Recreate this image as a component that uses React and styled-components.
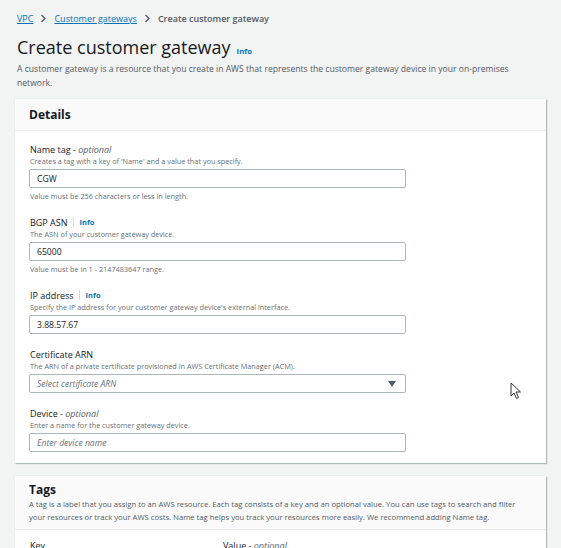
import { styled, createGlobalStyle } from 'styled-components'

const GlobalStyle = createGlobalStyle`
  html, body {
    margin: 0;
    padding: 0;
    background: #f2f3f3;
    font-family: "Open Sans", "Noto Sans", sans-serif;
    color: #16191f;
  }
`

const Page = styled.div`
  position: relative;
  width: 561px;
  height: 548px;
  overflow: hidden;
  padding: 11px 15px 0 15px;
  box-sizing: border-box;
`

const Breadcrumbs = styled.nav`
  display: flex;
  align-items: center;
  gap: 7px;
  padding-left: 2px;
  font-size: 9px;
  height: 14px;
`

const Crumb = styled.a`
  color: #0073bb;
  text-decoration: underline;
`

const Current = styled.span`
  color: #545b64;
  font-weight: 600;
`

const Chevron = () => (
  <svg width="7" height="9" viewBox="0 0 7 9">
    <path d="M1.5 1 L5 4.5 L1.5 8" fill="none" stroke="#545b64" strokeWidth="1.4" />
  </svg>
)

const TitleRow = styled.div`
  display: flex;
  align-items: baseline;
  gap: 6px;
  margin-top: 9px;
  padding-left: 2px;
`

const Title = styled.h1`
  margin: 0;
  font-size: 18px;
  font-weight: 400;
  line-height: 26px;
`

const Info = styled.span`
  color: #0073bb;
  font-weight: 700;
  font-size: ${p => p.$size || 7.5}px;
`

const Intro = styled.p`
  margin: 2px 0 0;
  padding-left: 2px;
  font-size: 8.6px;
  line-height: 14px;
  color: #545b64;
`

const Card = styled.section`
  background: #fff;
  margin-top: ${p => p.$top}px;
  box-shadow: 1px 1px 1px 0 rgba(0, 28, 36, 0.25), 0 0 0 1px rgba(0, 0, 0, 0.02);
`

const CardHeader = styled.header`
  background: #fafafa;
  border-bottom: 1px solid #eaeded;
  padding: ${p => p.$pad};
`

const CardTitle = styled.h2`
  margin: 0;
  font-size: 12px;
  font-weight: 700;
  line-height: 16px;
`

const CardDesc = styled.p`
  margin: 0;
  font-size: 7.7px;
  line-height: 12.5px;
  color: #545b64;
`

const Form = styled.div`
  display: flex;
  flex-direction: column;
  gap: 13px;
  padding: 11px 15px 11px 14px;
`

const Field = styled.div`
  display: flex;
  flex-direction: column;
`

const LabelRow = styled.div`
  display: flex;
  align-items: center;
  height: 14px;
  font-size: 9px;
  padding-left: 1px;
`

const Sep = styled.span`
  display: inline-block;
  width: 1px;
  height: 10px;
  background: #d5dbdb;
  margin: 0 6px 0 5px;
`

const Opt = styled.i`
  color: #545b64;
`

const Hint = styled.div`
  font-size: 7.3px;
  line-height: 11px;
  color: #687078;
  padding-left: 1px;
`

const Box = styled.div`
  display: flex;
  align-items: center;
  justify-content: space-between;
  width: 377px;
  height: 19px;
  box-sizing: border-box;
  margin-top: 2px;
  border: 1px solid #aab7b8;
  border-radius: 2px;
  padding: 0 9px 0 7px;
  font-size: 8.6px;
  color: ${p => (p.$placeholder ? '#687078' : '#16191f')};
  font-style: ${p => (p.$placeholder ? 'italic' : 'normal')};
  background: #fff;
`

const Constraint = styled(Hint)`
  margin-top: 3px;
`

const TagCols = styled.div`
  display: grid;
  grid-template-columns: 193px 1fr;
  padding: 9px 15px;
  font-size: 9px;
`

const Cursor = styled.svg`
  position: absolute;
  left: 510px;
  top: 382px;
`

function FieldBlock({ label, optional, info, hint, value, placeholder, select, constraint }) {
  return (
    <Field>
      <LabelRow>
        {label}
        {optional && <>&nbsp;-&nbsp;<Opt>optional</Opt></>}
        {info && (
          <>
            <Sep />
            <Info>Info</Info>
          </>
        )}
      </LabelRow>
      <Hint>{hint}</Hint>
      <Box $placeholder={!!placeholder}>
        <span>{value || placeholder}</span>
        {select && (
          <svg width="8" height="6" viewBox="0 0 8 6">
            <path d="M0 0 H8 L4 6 Z" fill="#545b64" />
          </svg>
        )}
      </Box>
      {constraint && <Constraint>{constraint}</Constraint>}
    </Field>
  )
}

export default function App() {
  return (
    <Page>
      <GlobalStyle />
      <Breadcrumbs>
        <Crumb>VPC</Crumb>
        <Chevron />
        <Crumb>Customer gateways</Crumb>
        <Chevron />
        <Current>Create customer gateway</Current>
      </Breadcrumbs>
      <TitleRow>
        <Title>Create customer gateway</Title>
        <Info $size={7.8}>Info</Info>
      </TitleRow>
      <Intro>
        A customer gateway is a resource that you create in AWS that represents the customer gateway device in your on-premises
        network.
      </Intro>

      <Card $top={9}>
        <CardHeader $pad="8px 14px 7px">
          <CardTitle>Details</CardTitle>
        </CardHeader>
        <Form>
          <FieldBlock
            label="Name tag"
            optional
            hint="Creates a tag with a key of 'Name' and a value that you specify."
            value="CGW"
            constraint="Value must be 256 characters or less in length."
          />
          <FieldBlock
            label="BGP ASN"
            info
            hint="The ASN of your customer gateway device."
            value="65000"
            constraint="Value must be in 1 - 2147483647 range."
          />
          <FieldBlock
            label="IP address"
            info
            hint="Specify the IP address for your customer gateway device's external interface."
            value="3.88.57.67"
          />
          <FieldBlock
            label="Certificate ARN"
            hint="The ARN of a private certificate provisioned in AWS Certificate Manager (ACM)."
            placeholder="Select certificate ARN"
            select
          />
          <FieldBlock
            label="Device"
            optional
            hint="Enter a name for the customer gateway device."
            placeholder="Enter device name"
          />
        </Form>
      </Card>

      <Card $top={13}>
        <CardHeader $pad="6px 14px 6px">
          <CardTitle>Tags</CardTitle>
          <CardDesc>
            A tag is a label that you assign to an AWS resource. Each tag consists of a key and an optional value. You can use tags to search and filter
            your resources or track your AWS costs. Name tag helps you track your resources more easily. We recommend adding Name tag.
          </CardDesc>
        </CardHeader>
        <TagCols>
          <span>Key</span>
          <span>
            Value - <Opt>optional</Opt>
          </span>
        </TagCols>
      </Card>

      <Cursor width="12" height="18" viewBox="0 0 12 18">
        <path d="M1 1 L1 14 L4 11 L6.5 16.5 L8.5 15.5 L6 10 L10.5 10 Z" fill="#fff" stroke="#333" strokeWidth="1" strokeLinejoin="round" />
      </Cursor>
    </Page>
  )
}
